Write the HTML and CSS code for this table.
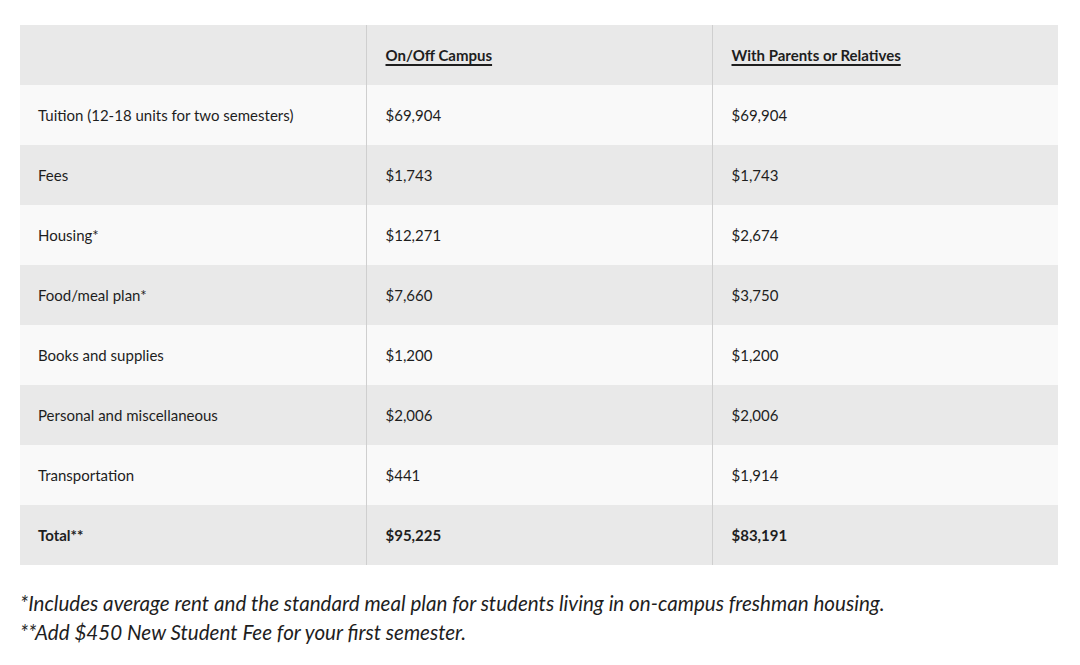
FILE: index.html
```html
<!DOCTYPE html>
<html>
<head>
<meta charset="utf-8">
<link rel="stylesheet" href="styles.css">
</head>
<body>
<div class="page">
  <table class="costs">
    <thead>
      <tr>
        <th></th>
        <th><span class="hd">On/Off Campus</span></th>
        <th><span class="hd">With Parents or Relatives</span></th>
      </tr>
    </thead>
    <tbody>
      <tr><td>Tuition (12-18 units for two semesters)</td><td>$69,904</td><td>$69,904</td></tr>
      <tr><td>Fees</td><td>$1,743</td><td>$1,743</td></tr>
      <tr><td>Housing*</td><td>$12,271</td><td>$2,674</td></tr>
      <tr><td>Food/meal plan*</td><td>$7,660</td><td>$3,750</td></tr>
      <tr><td>Books and supplies</td><td>$1,200</td><td>$1,200</td></tr>
      <tr><td>Personal and miscellaneous</td><td>$2,006</td><td>$2,006</td></tr>
      <tr><td>Transportation</td><td>$441</td><td>$1,914</td></tr>
      <tr class="total"><td>Total**</td><td>$95,225</td><td>$83,191</td></tr>
    </tbody>
  </table>
  <div class="notes">
    <p>*Includes average rent and the standard meal plan for students living in on-campus freshman housing.</p>
    <p>**Add $450 New Student Fee for your first semester.</p>
  </div>
</div>
</body>
</html>
```
FILE: styles.css
```css
html, body {
  margin: 0;
  padding: 0;
  background: #ffffff;
}
body {
  font-family: "Lato", "Noto Sans", sans-serif;
  color: #1e1e1e;
}
.page {
  padding: 25px 23px 0 20px;
}
.costs {
  width: 1038px;
  border-collapse: collapse;
  table-layout: fixed;
  font-size: 15px;
}
.costs th,
.costs td {
  height: 60px;
  padding: 0 19px;
  text-align: left;
  vertical-align: middle;
  border-left: 1px solid #cfcfcf;
  box-sizing: border-box;
}
.costs th:first-child,
.costs td:first-child {
  border-left: none;
  padding-left: 18px;
}
.costs thead tr {
  background: #e9e9e9;
}
.costs th {
  font-weight: 700;
}
.hd {
  text-decoration: underline;
  text-decoration-thickness: 1.5px;
  text-underline-offset: 3px;
}
.costs tbody tr:nth-child(odd) {
  background: #f9f9f9;
}
.costs tbody tr:nth-child(even) {
  background: #e9e9e9;
}
.costs tr.total td {
  font-weight: 700;
}
.notes {
  margin-top: 24px;
  font-style: italic;
  font-size: 20.6px;
}
.notes p {
  margin: 0;
  line-height: 29px;
}
```
